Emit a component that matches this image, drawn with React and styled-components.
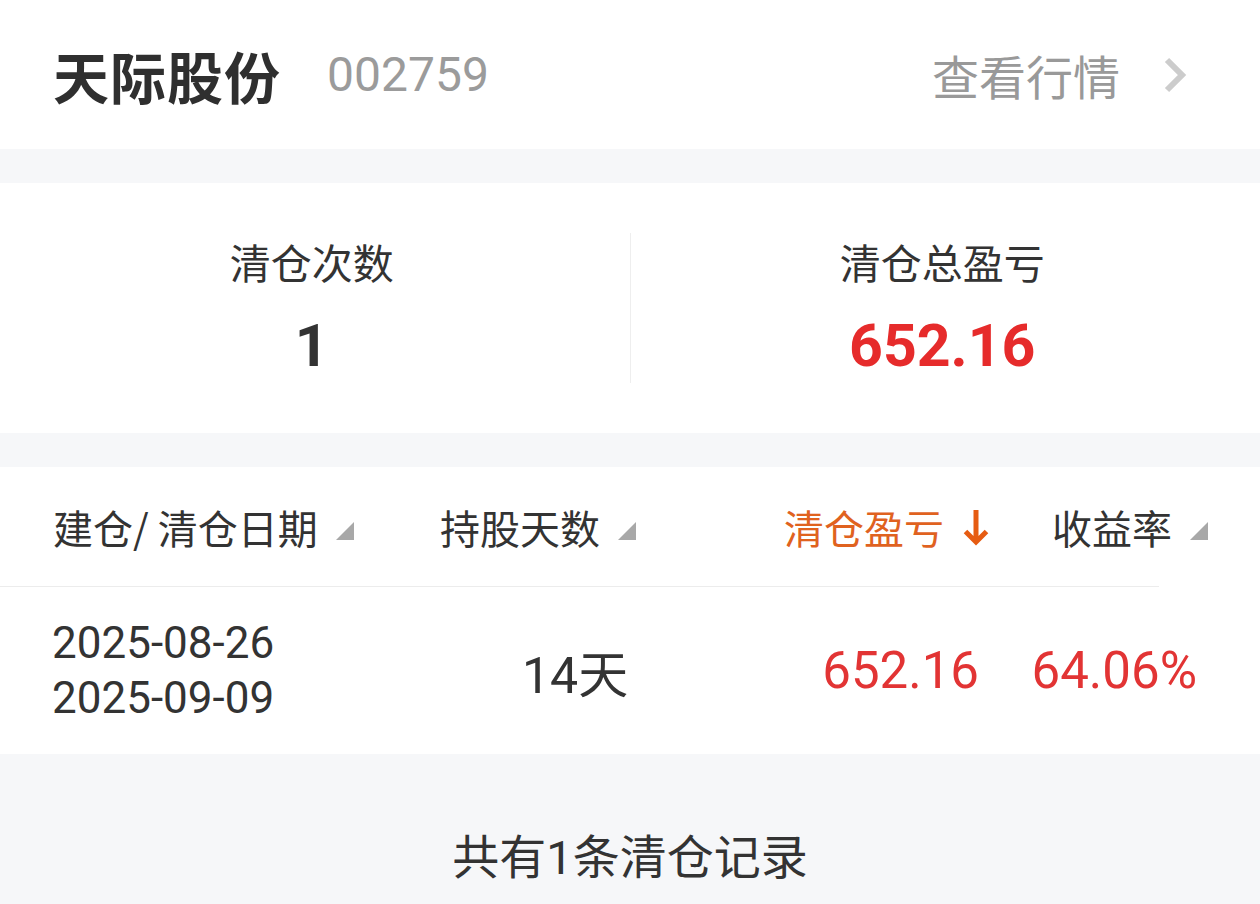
import React from "react";
import styled, { createGlobalStyle } from "styled-components";

const GlobalStyle = createGlobalStyle`
  html, body {
    margin: 0;
    padding: 0;
    background: #f6f7f9;
  }
  body {
    font-family: Roboto, "Noto Sans CJK SC", sans-serif;
    color: #333;
  }
`;

const record = {
  buyDate: "2025-08-26",
  sellDate: "2025-09-09",
  days: "14天",
  profit: "652.16",
  rate: "64.06%",
};

function App() {
  return (
    <Page>
      <GlobalStyle />
      <Header>
        <Name>天际股份</Name>
        <Code>002759</Code>
        <QuoteLink>
          查看行情
          <svg width="26" height="38" viewBox="0 0 26 38">
            <path d="M5 4 L20 19 L5 34" fill="none" stroke="#cccccc" strokeWidth="6" />
          </svg>
        </QuoteLink>
      </Header>

      <Stats>
        <StatCol>
          <StatLabel>清仓次数</StatLabel>
          <StatValue>1</StatValue>
        </StatCol>
        <VDivider />
        <StatCol>
          <StatLabel>清仓总盈亏</StatLabel>
          <StatValue $red>652.16</StatValue>
        </StatCol>
      </Stats>

      <Table>
        <HeadRow>
          <HeadCell>
            建仓/ 清仓日期
            <SortMark />
          </HeadCell>
          <HeadCell>
            持股天数
            <SortMark />
          </HeadCell>
          <HeadCell $right $active>
            清仓盈亏
            <svg width="28" height="38" viewBox="0 0 28 38">
              <path d="M14 2 V34 M3.5 23.5 L14 34 L24.5 23.5" fill="none" stroke="#e65c12" strokeWidth="5" />
            </svg>
          </HeadCell>
          <HeadCell $right>
            收益率
            <SortMark />
          </HeadCell>
        </HeadRow>
        <HDivider />
        <DataRow>
          <DateCell>
            <div>{record.buyDate}</div>
            <div>{record.sellDate}</div>
          </DateCell>
          <DaysCell>{record.days}</DaysCell>
          <NumCell>{record.profit}</NumCell>
          <NumCell>{record.rate}</NumCell>
        </DataRow>
      </Table>

      <Footer>共有1条清仓记录</Footer>
    </Page>
  );
}

function SortMark() {
  return (
    <Mark width="18" height="18" viewBox="0 0 18 18">
      <polygon points="0,18 18,18 18,0" fill="#a8a8a8" />
    </Mark>
  );
}

const Page = styled.div`
  width: 1260px;
  display: flex;
  flex-direction: column;
  gap: 34px;
`;

const Header = styled.div`
  height: 149px;
  background: #fff;
  display: flex;
  align-items: center;
  padding: 0 72px 0 53px;
`;

const Name = styled.div`
  font-family: "Noto Sans CJK SC", sans-serif;
  font-size: 56px;
  font-weight: 700;
  color: #2f2f2f;
  letter-spacing: 1px;
`;

const Code = styled.div`
  margin-left: 46px;
  font-size: 48px;
  color: #9b9b9b;
`;

const QuoteLink = styled.div`
  margin-left: auto;
  display: flex;
  align-items: center;
  gap: 42px;
  font-family: "Noto Sans CJK SC", sans-serif;
  font-size: 47px;
  color: #999;
`;

const Stats = styled.div`
  height: 250px;
  background: #fff;
  display: flex;
  align-items: center;
`;

const StatCol = styled.div`
  flex: 1;
  height: 100%;
  box-sizing: border-box;
  padding: 50px 6px 0 0;
  display: flex;
  flex-direction: column;
  align-items: center;
`;

const StatLabel = styled.div`
  font-family: "Noto Sans CJK SC", sans-serif;
  font-size: 41px;
  line-height: 56px;
  color: #333;
`;

const StatValue = styled.div`
  margin-top: 22px;
  font-size: 59px;
  line-height: 70px;
  font-weight: 700;
  color: ${(p) => (p.$red ? "#e62b2b" : "#333")};
`;

const VDivider = styled.div`
  width: 1px;
  height: 150px;
  background: #eeeeee;
`;

const Table = styled.div`
  background: #fff;
`;

const Grid = styled.div`
  display: grid;
  grid-template-columns: 387px 300px 250px 1fr;
  padding: 0 52px 0 53px;
`;

const HeadRow = styled(Grid)`
  height: 119px;
  align-items: center;
`;

const HeadCell = styled.div`
  display: flex;
  align-items: center;
  justify-content: ${(p) => (p.$right ? "flex-end" : "flex-start")};
  gap: 18px;
  font-family: "Noto Sans CJK SC", sans-serif;
  font-size: 40px;
  color: ${(p) => (p.$active ? "#e0621f" : "#333")};
  white-space: nowrap;
`;

const Mark = styled.svg`
  margin-top: 8px;
`;

const HDivider = styled.div`
  height: 1px;
  margin-right: 101px;
  background: #ececec;
`;

const DataRow = styled(Grid)`
  height: 167px;
  align-items: center;
`;

const DateCell = styled.div`
  margin-left: -1px;
  font-size: 44px;
  line-height: 55px;
  color: #333;
`;

const DaysCell = styled.div`
  padding-left: 82px;
  font-size: 50px;
  color: #333;
`;

const NumCell = styled.div`
  text-align: right;
  padding-right: 11px;
  font-size: 51px;
  color: #e23434;
`;

const Footer = styled.div`
  padding-top: 74px;
  height: 150px;
  box-sizing: border-box;
  margin-top: -34px;
  text-align: center;
  font-family: Roboto, "Noto Sans CJK SC", sans-serif;
  font-size: 47px;
  line-height: 60px;
  color: #333;
`;

export default App;
